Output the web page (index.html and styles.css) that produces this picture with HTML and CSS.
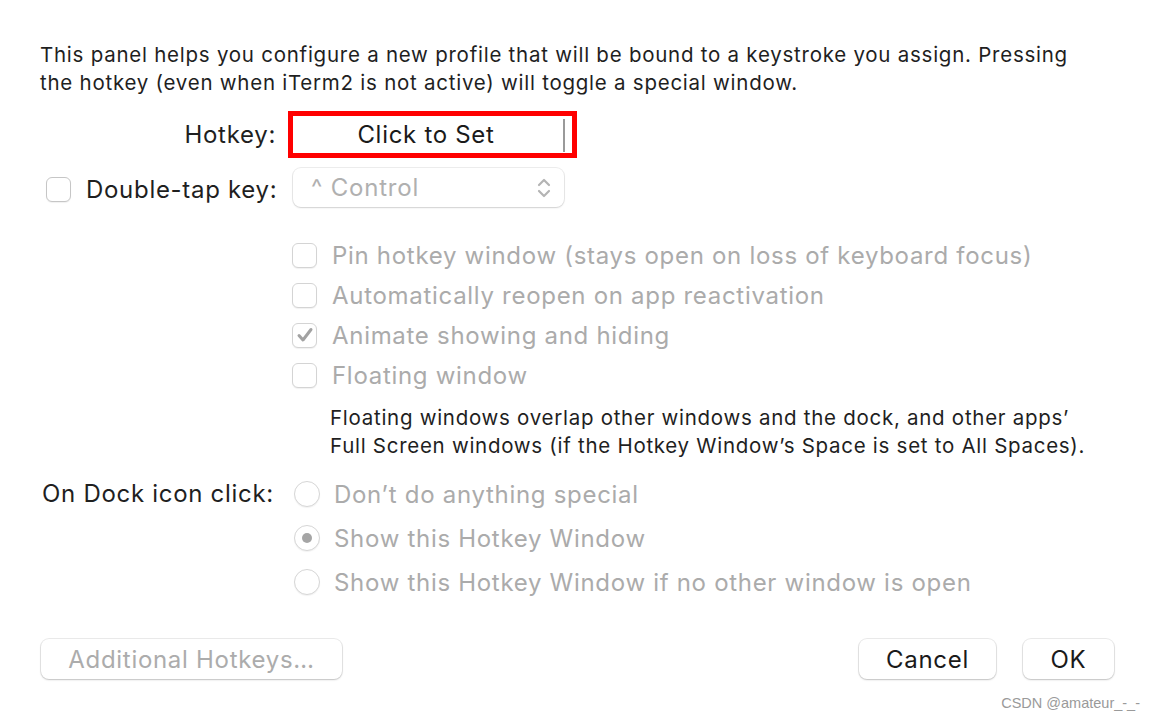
FILE: index.html
```
<!DOCTYPE html>
<html lang="en">
<head>
<meta charset="utf-8">
<title>Hotkey Window</title>
<link rel="stylesheet" href="styles.css">
</head>
<body>
<div class="panel">
  <p class="intro">This panel helps you configure a new profile that will be bound to a keystroke you assign. Pressing the hotkey (even when iTerm2 is not active) will toggle a special window.</p>

  <div class="row hotkey-row">
    <div class="label">Hotkey:</div>
    <div class="hotkey-frame"><div class="hotkey-field"><span>Click to Set</span><i class="caret"></i></div></div>
  </div>

  <div class="row tap-row">
    <div class="label tap-label"><span class="box"></span><span>Double-tap key:</span></div>
    <div class="popup"><span>^ Control</span>
      <svg class="chev" width="14" height="22" viewBox="0 0 14 22"><path d="M2 8 L7 3 L12 8 M2 14 L7 19 L12 14" fill="none" stroke="#b4b4b4" stroke-width="2.2" stroke-linecap="round" stroke-linejoin="round"/></svg>
    </div>
  </div>

  <div class="checks">
    <div class="check"><span class="box"></span><span>Pin hotkey window (stays open on loss of keyboard focus)</span></div>
    <div class="check"><span class="box"></span><span>Automatically reopen on app reactivation</span></div>
    <div class="check"><span class="box"><svg width="18" height="16" viewBox="0 0 18 16"><path d="M3 8.5 L7 13 L15 2.5" fill="none" stroke="#a2a2a2" stroke-width="3" stroke-linecap="round" stroke-linejoin="round"/></svg></span><span>Animate showing and hiding</span></div>
    <div class="check"><span class="box"></span><span>Floating window</span></div>
  </div>

  <p class="note">Floating windows overlap other windows and the dock, and other apps’ Full Screen windows (if the Hotkey Window’s Space is set to All Spaces).</p>

  <div class="row dock-row">
    <div class="label dock-label">On Dock icon click:</div>
    <div class="radios">
      <div class="radio"><span class="circle"></span><span>Don’t do anything special</span></div>
      <div class="radio"><span class="circle on"></span><span>Show this Hotkey Window</span></div>
      <div class="radio"><span class="circle"></span><span>Show this Hotkey Window if no other window is open</span></div>
    </div>
  </div>

  <div class="buttons">
    <button class="btn disabled wide">Additional Hotkeys…</button>
    <div class="spacer"></div>
    <button class="btn cancel">Cancel</button>
    <button class="btn ok">OK</button>
  </div>
</div>
<div class="watermark">CSDN @amateur_-_-</div>
</body>
</html>
```
FILE: styles.css
```
html, body {
  margin: 0;
  padding: 0;
  background: #ffffff;
}
body {
  font-family: Inter, "Noto Sans", "Liberation Sans", sans-serif;
  color: #1f1f1f;
  width: 1156px;
  height: 720px;
  overflow: hidden;
  position: relative;
}
.panel {
  padding: 41px 0 0 40px;
}
.intro {
  margin: 0;
  width: 1060px;
  font-size: 20.5px;
  line-height: 28px;
  letter-spacing: 0.75px;
}
.row {
  display: flex;
  align-items: center;
}
.label {
  width: 236px;
  text-align: right;
  font-size: 24px;
  letter-spacing: 0.7px;
  flex: none;
}
.hotkey-row {
  margin-top: 14px;
}
.hotkey-frame {
  margin-left: 12px;
  width: 279px;
  height: 37px;
  border: 5px solid #ff0000;
  background: #fff;
}
.hotkey-field {
  position: relative;
  height: 100%;
  display: flex;
  align-items: center;
  justify-content: center;
  font-size: 24px;
  letter-spacing: 0.7px;
  padding-right: 13px;
  color: #1a1a1a;
}
.caret {
  position: absolute;
  right: 7px;
  top: 3px;
  bottom: 1px;
  width: 2px;
  background: #9a9a9a;
}
.tap-row {
  margin-top: 10px;
}
.tap-label {
  display: flex;
  align-items: center;
  justify-content: flex-start;
  gap: 15px;
  width: 239px;
  margin-left: 6px;
  padding-top: 4px;
  text-align: left;
}
.box {
  width: 25px;
  height: 25px;
  box-sizing: border-box;
  border: 1px solid #d4d4d4;
  border-radius: 6px;
  background: #fff;
  box-shadow: 0 1px 1px rgba(0,0,0,0.06);
  display: inline-flex;
  align-items: center;
  justify-content: center;
  flex: none;
}
.tap-label .box {
  border-color: #c6c6c6;
}
.popup {
  margin-left: 8px;
  width: 271px;
  height: 39px;
  box-sizing: border-box;
  border-radius: 8px;
  background: #fff;
  box-shadow: 0 0 0 1px rgba(0,0,0,0.07), 0 1px 2px rgba(0,0,0,0.12);
  display: flex;
  align-items: center;
  justify-content: space-between;
  padding: 0 13px 0 18px;
  font-size: 24px;
  letter-spacing: 0.8px;
  color: #b0b0b0;
}
.checks {
  margin-top: 28px;
  margin-left: 252px;
}
.check {
  height: 40px;
  display: flex;
  align-items: center;
  gap: 15px;
  font-size: 24px;
  letter-spacing: 0.7px;
  color: #ababab;
}
.note {
  margin: 9px 0 0 290px;
  width: 775px;
  font-size: 20.5px;
  line-height: 28px;
  letter-spacing: 0.72px;
  color: #1f1f1f;
}
.dock-row {
  margin-top: 12px;
  align-items: flex-start;
}
.dock-label {
  width: 234px;
  text-align: left;
  padding-top: 7px;
  margin-left: 2px;
}
.radios {
  margin-left: 18px;
}
.radio {
  height: 44px;
  display: flex;
  align-items: center;
  gap: 14px;
  font-size: 24px;
  letter-spacing: 0.7px;
  color: #ababab;
}
.circle {
  width: 26px;
  height: 26px;
  box-sizing: border-box;
  border: 1px solid #d6d6d6;
  border-radius: 50%;
  background: #fff;
  box-shadow: 0 1px 1px rgba(0,0,0,0.05);
  display: inline-flex;
  align-items: center;
  justify-content: center;
  flex: none;
}
.circle.on::after {
  content: "";
  width: 10px;
  height: 10px;
  border-radius: 50%;
  background: #a5a5a5;
}
.buttons {
  margin-top: 35px;
  display: flex;
  align-items: center;
  padding-right: 42px;
  margin-left: 1px;
}
.spacer {
  flex: 1;
}
.btn {
  height: 40px;
  box-sizing: border-box;
  border: none;
  border-radius: 8px;
  background: #fff;
  box-shadow: 0 0 0 1px rgba(0,0,0,0.08), 0 1px 2px rgba(0,0,0,0.18);
  font-family: inherit;
  font-size: 24px;
  letter-spacing: 0.7px;
  color: #1a1a1a;
  padding: 0;
}
.btn.wide {
  width: 301px;
  color: #acacac;
}
.btn.cancel {
  width: 137px;
}
.btn.ok {
  width: 91px;
  margin-left: 27px;
}
.watermark {
  position: absolute;
  right: 16px;
  top: 695px;
  font-family: "Liberation Sans", Arial, sans-serif;
  font-size: 14.5px;
  color: #9a9a9a;
}
```
